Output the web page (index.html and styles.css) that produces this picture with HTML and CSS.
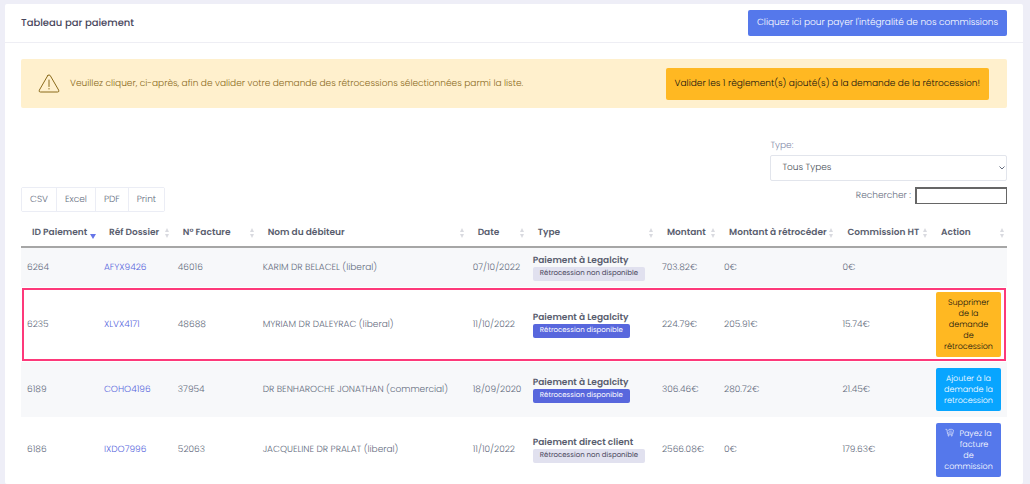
FILE: index.html
```html
<!DOCTYPE html>
<html lang="fr">

<head>
    <meta charset="UTF-8">
    <meta name="viewport" content="width=device-width, initial-scale=1.0">
    <title>Tableau par paiement</title>
    <link rel="stylesheet" href="styles.css">
</head>

<body>
    <main class="card">
        <header class="card-header">
            <h1>Tableau par paiement</h1>
            <button type="button" class="btn btn-primary">Cliquez ici pour payer l'intégralité de nos commissions</button>
        </header>

        <div class="card-body">
            <div class="alert">
                <svg class="alert-icon" viewBox="0 0 22 19" fill="none" stroke="currentColor" stroke-linecap="round" stroke-linejoin="round">
                    <path d="M9.8 1.5 1.3 16.2Q.6 18 2.4 18h17.2q1.8 0 1.1-1.8L12.2 1.5Q11 .1 9.8 1.5Z" />
                    <path d="M11 6v6.500M11 14.500v.5" />
                </svg>
                <p>Veuillez cliquer, ci-après, afin de valider votre demande des rétrocessions sélectionnées parmi la liste.</p>
                <button type="button" class="btn btn-warning btn-tall">Valider les 1 règlement(s) ajouté(s) à la demande de la rétrocession!</button>
            </div>

            <div class="filter">
                <label for="type">Type:</label>
                <div class="select-wrap">
                    <select id="type">
                        <option>Tous Types</option>
                    </select>
                    <svg class="chevron" viewBox="0 0 6 4" fill="none" stroke="currentColor">
                        <path d="m.5.5 2.500 2.500L5.500.5" />
                    </svg>
                </div>
            </div>

            <div class="toolbar">
                <div class="exports">
                    <button type="button">CSV</button>
                    <button type="button">Excel</button>
                    <button type="button">PDF</button>
                    <button type="button">Print</button>
                </div>
                <div class="search">
                    <label for="search">Rechercher :</label>
                    <input type="search" id="search">
                </div>
            </div>

            <table>
                <colgroup>
                    <col class="col-id">
                    <col class="col-ref">
                    <col class="col-facture">
                    <col class="col-nom">
                    <col class="col-date">
                    <col class="col-type">
                    <col class="col-montant">
                    <col class="col-retro">
                    <col class="col-ht">
                    <col class="col-action">
                </colgroup>
                <thead>
                    <tr>
                        <th class="sorted">ID Paiement</th>
                        <th>Réf Dossier</th>
                        <th>N° Facture</th>
                        <th>Nom du débiteur</th>
                        <th>Date</th>
                        <th>Type</th>
                        <th>Montant</th>
                        <th>Montant à rétrocéder</th>
                        <th>Commission HT</th>
                        <th>Action</th>
                    </tr>
                </thead>
                <tbody>
                    <tr>
                        <td>6264</td>
                        <td><a href="#">AFYX9426</a></td>
                        <td>46016</td>
                        <td>KARIM DR BELACEL (liberal)</td>
                        <td>07/10/2022</td>
                        <td><strong>Paiement à Legalcity</strong><span class="badge">Rétrocession non disponible</span></td>
                        <td>703.82€</td>
                        <td>0€</td>
                        <td>0€</td>
                        <td></td>
                    </tr>
                    <tr class="selected">
                        <td>6235</td>
                        <td><a href="#">XLVX4171</a></td>
                        <td>48688</td>
                        <td>MYRIAM DR DALEYRAC (liberal)</td>
                        <td>11/10/2022</td>
                        <td><strong>Paiement à Legalcity</strong><span class="badge badge-ok">Rétrocession disponible</span></td>
                        <td>224.79€</td>
                        <td>205.91€</td>
                        <td>15.74€</td>
                        <td><button type="button" class="btn btn-warning btn-cell">Supprimer<br>de la<br>demande<br>de<br>rétrocession</button></td>
                    </tr>
                    <tr>
                        <td>6189</td>
                        <td><a href="#">COHO4196</a></td>
                        <td>37954</td>
                        <td>DR BENHAROCHE JONATHAN (commercial)</td>
                        <td>18/09/2020</td>
                        <td><strong>Paiement à Legalcity</strong><span class="badge badge-ok">Rétrocession disponible</span></td>
                        <td>306.46€</td>
                        <td>280.72€</td>
                        <td>21.45€</td>
                        <td><button type="button" class="btn btn-info btn-cell">Ajouter à la<br>demande la<br>retrocession</button></td>
                    </tr>
                    <tr>
                        <td>6186</td>
                        <td><a href="#">IXDO7996</a></td>
                        <td>52063</td>
                        <td>JACQUELINE DR PRALAT (liberal)</td>
                        <td>11/10/2022</td>
                        <td><strong>Paiement direct client</strong><span class="badge">Rétrocession non disponible</span></td>
                        <td>2566.08€</td>
                        <td>0€</td>
                        <td>179.63€</td>
                        <td>
                            <button type="button" class="btn btn-primary btn-cell">
                                <svg class="cart" viewBox="0 0 10 10" fill="none" stroke="currentColor">
                                    <path d="M.5 1.500h1.500l1 5.500h5.500l1-4.500-2-1h-3L3 3.500M3 5.500h5.500M4.500 3.500h3" />
                                    <circle cx="4" cy="8.500" r=".6" />
                                    <circle cx="7.500" cy="8.500" r=".6" />
                                </svg>Payez la<br><span class="indent">facture</span><br>de<br>commission
                            </button>
                        </td>
                    </tr>
                </tbody>
            </table>
        </div>
    </main>
</body>

</html>
```

FILE: styles.css
```css
* {
    box-sizing: border-box;
}

body {
    margin: 0;
    padding: 4px 7px 0 5px;
    background-color: #eeeef7;
    color: #646c7e;
    font-family: Poppins, Inter, sans-serif;
    font-size: 9px;
    font-weight: 300;
    line-height: 12px;
    text-rendering: geometricPrecision;
}

button, input, select {
    font: inherit;
    text-rendering: inherit;
}

.card {
    min-height: calc(100vh - 4px);
    background-color: #fff;
    border-radius: 2px;
}

.card-header {
    display: flex;
    justify-content: space-between;
    align-items: center;
    height: 39px;
    padding: 0 16px;
    border-bottom: 1px solid #eeeef4;
}

h1 {
    margin: 0;
    color: #48465b;
    font-size: 10px;
    font-weight: 500;
}

.card-body {
    padding: 16px 16px 0;
}

.btn {
    padding: 7px 9px;
    border: 0;
    border-radius: 2px;
    color: #fff;
    line-height: 12px;
    cursor: pointer;
}

.btn-primary {
    background-color: #5578eb;
}

.btn-warning {
    background-color: #ffb822;
    color: #111;
}

.btn-info {
    background-color: #08a5ff;
}

.btn-tall {
    padding: 10px 9px;
}

.btn-cell {
    width: 100%;
    padding: 5px 0;
    font-size: 8px;
    line-height: 11px;
}

.alert {
    display: flex;
    align-items: center;
    height: 49px;
    padding: 0 18px 0 17px;
    background-color: #fff0cd;
    border-radius: 2px;
    color: #8a6a1a;
}

.alert-icon {
    width: 22px;
    height: 19px;
    margin-right: 10px;
}

.alert p {
    margin: 0;
    flex: 1;
}

.filter {
    width: 24%;
    margin: 32px 0 0 auto;
}

.filter label {
    display: block;
    margin-bottom: 3px;
    color: #8289a8;
}

.select-wrap {
    position: relative;
}

select {
    display: block;
    width: 100%;
    height: 26px;
    padding: 0 11px;
    border: 1px solid #e2e5ec;
    border-radius: 2px;
    background-color: #fff;
    color: #495057;
    appearance: none;
}

.chevron {
    position: absolute;
    top: 11px;
    right: 2px;
    width: 6px;
    height: 4px;
    pointer-events: none;
}

.toolbar {
    display: flex;
    justify-content: space-between;
    align-items: flex-start;
    margin-top: 6px;
}

.exports {
    display: flex;
    border: 1px solid #ebedf5;
    border-radius: 2px;
}

.exports button {
    height: 23px;
    padding: 0 8px;
    border: 0;
    background-color: #fff;
    color: #646c7e;
}

.exports button + button {
    border-left: 1px solid #ebedf5;
}

.search {
    display: flex;
    align-items: center;
    gap: 4px;
}

.search input {
    width: 92px;
    height: 17px;
    padding: 0 4px;
    border: 1px solid #666;
    border-top-width: 2px;
    border-left-width: 2px;
    border-radius: 0;
    background-color: #fff;
    appearance: none;
}

table {
    width: 100%;
    margin-top: 8px;
    table-layout: fixed;
    border-collapse: separate;
    border-spacing: 0;
}

.col-id {
    width: 7.8%;
}

.col-ref {
    width: 7.5%;
}

.col-facture {
    width: 8.6%;
}

.col-nom {
    width: 21.3%;
}

.col-date {
    width: 6.1%;
}

.col-type {
    width: 13.1%;
}

.col-montant {
    width: 6.3%;
}

.col-retro {
    width: 12%;
}

.col-ht {
    width: 9.5%;
}

.col-action {
    width: 7.8%;
}

th {
    position: relative;
    height: 28px;
    padding: 0 0 0 11px;
    border-bottom: 2px solid #a6a6a6;
    color: #595d6e;
    font-weight: 600;
    text-align: left;
    white-space: nowrap;
}

/* sort arrows */
th::before,
th::after {
    content: "";
    position: absolute;
    right: 3px;
    border: 2px solid transparent;
}

th::before {
    top: 6px;
    border-bottom: 4px solid #d9dae0;
}

th::after {
    top: 14px;
    border-top: 4px solid #d9dae0;
}

th.sorted::before {
    display: none;
}

th.sorted::after {
    right: 2px;
    border-width: 3px;
    border-top: 5px solid #6675e8;
}

td {
    height: 39px;
    padding: 6px;
    white-space: nowrap;
}

tbody tr:nth-child(odd) {
    background-color: #f7f8fa;
}

.selected {
    outline: 2px solid #fd397a;
    outline-offset: -3px;
}

.selected td {
    padding: 5px 6px;
}

td a {
    color: #5867dd;
    text-decoration: none;
}

td strong {
    display: block;
    color: #595d6e;
    font-weight: 600;
}

.badge {
    display: inline-block;
    padding: 1px 7px;
    border-radius: 2px;
    background-color: #e1e1ef;
    color: #48465b;
    font-size: 7px;
    font-weight: 400;
    line-height: 12px;
    vertical-align: top;
}

.badge-ok {
    background-color: #5867dd;
    color: #fff;
}

.cart {
    width: 9px;
    height: 9px;
    margin-right: 5px;
    vertical-align: top;
    stroke-width: .6;
}

.indent {
    padding-left: 11px;
}
```
